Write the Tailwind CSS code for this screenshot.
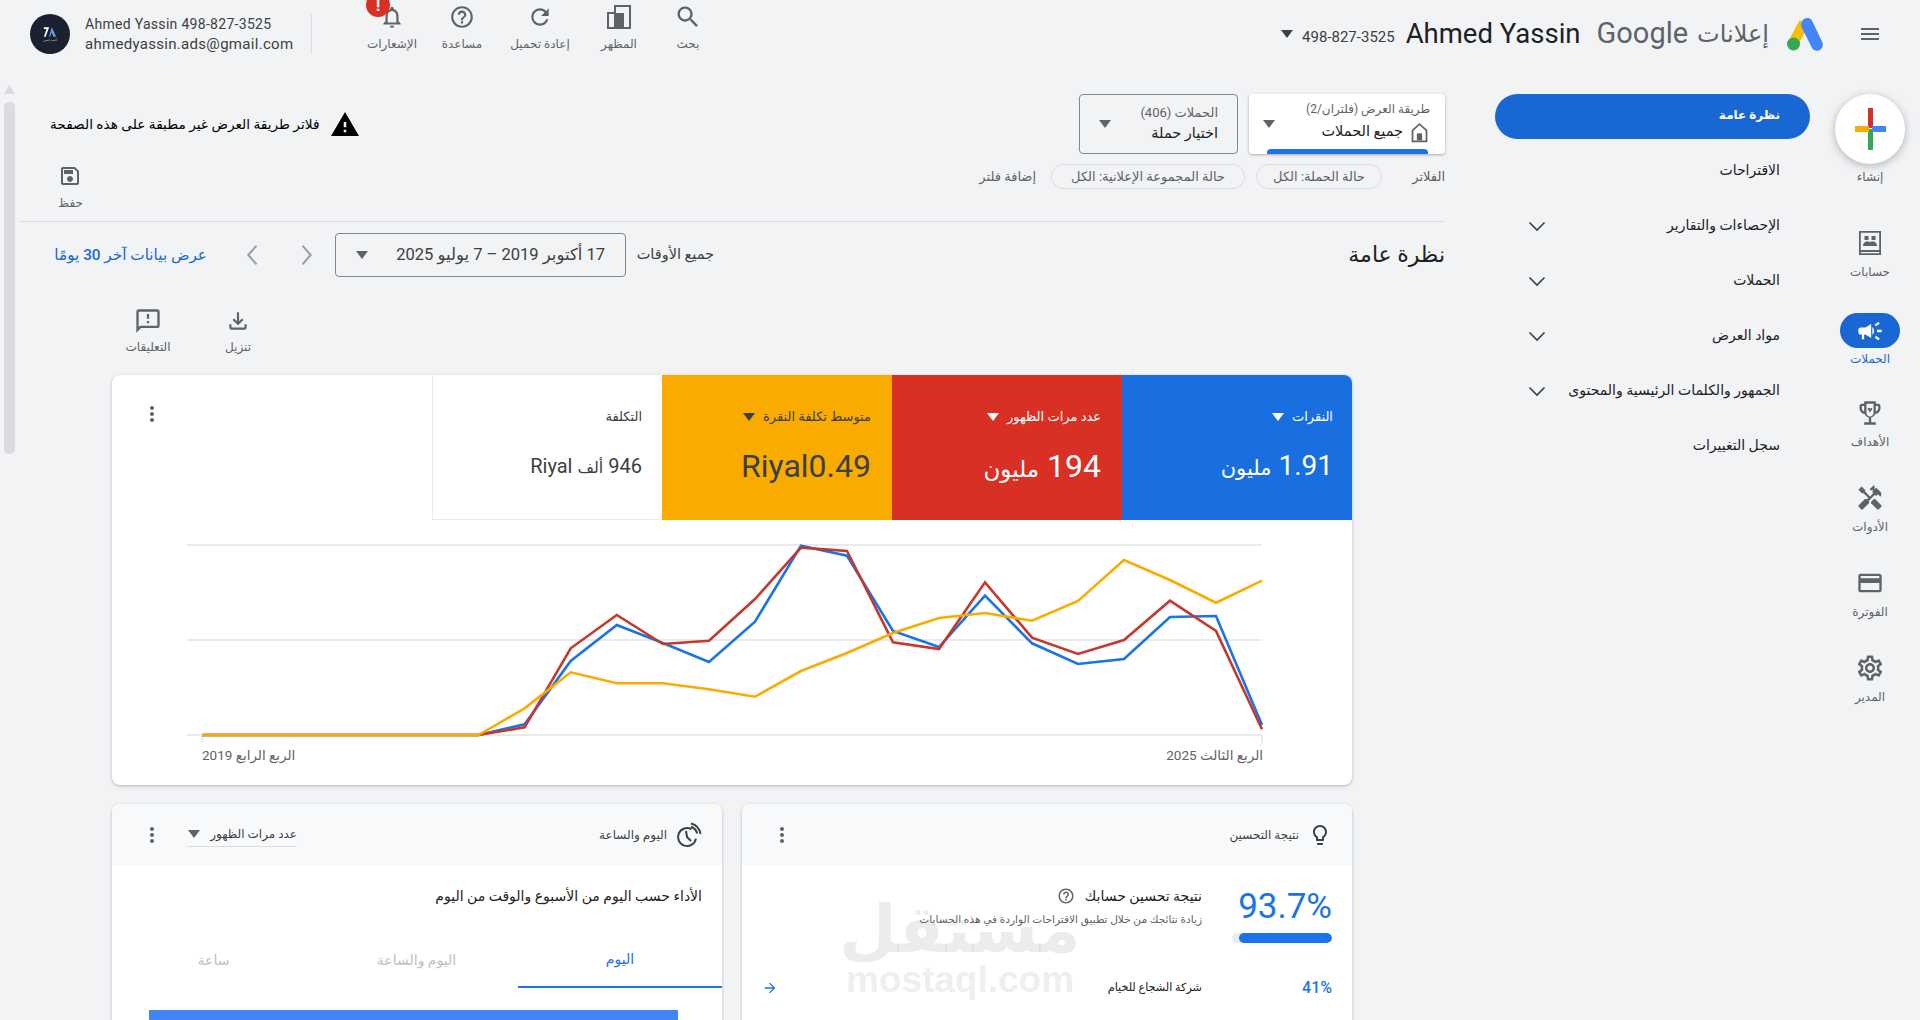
<!DOCTYPE html>
<html lang="ar" dir="rtl">
<head>
<meta charset="utf-8">
<script src="https://cdn.jsdelivr.net/npm/@tailwindcss/browser@4"></script>
<title>Google Ads</title>
</head>
<body class="relative w-[1920px] h-[1020px] overflow-hidden bg-[#f1f3f5] text-[#202124] font-['Roboto','Noto_Sans','DejaVu_Sans',sans-serif]">

<!-- top bar -->
<header class="flex justify-between h-[94px]">
  <div class="flex items-center h-[68px] pr-[38px]">
    <svg class="w-[24px] h-[24px] fill-[#5f6368]" viewBox="0 0 24 24"><path d="M3 18h18v-2H3v2zm0-5h18v-2H3v2zm0-7v2h18V6H3z"/></svg>
    <svg class="w-[36px] h-[34px] mr-[35px]" viewBox="0 0 36 34"><path d="M13 2.500 1.500 24l8 7L19 13z" fill="#fbbc04"/><path d="M24.500 2.500C22 0 17 .5 15 4c-1.500 3 -1 5 0 7l10 20c2 3 6 3.500 8.500 1.500 2.500-2 3-5 1.500-8z" fill="#4285f4"/><circle cx="6.500" cy="27" r="6.500" fill="#34a853"/></svg>
    <span class="text-[24px] text-[#5f6368] mr-[18px]">إعلانات</span>
    <span class="text-[29px] text-[#5f6368] mr-[9px]" dir="ltr">Google</span>
    <span class="text-[27.500px] text-[#202124] mr-[16px]" dir="ltr">Ahmed Yassin</span>
    <span class="text-[15px] text-[#3c4043] mr-[11px] mt-[7px]" dir="ltr">498-827-3525</span>
    <svg class="w-[12px] h-[8px] fill-[#3c4043] mr-[9px]" viewBox="0 0 12 8"><path d="M0 0h12L6 8z"/></svg>
  </div>
  <div class="flex items-start pl-[30px] pt-[14px]" dir="ltr">
    <div class="w-[40px] h-[40px] rounded-full bg-[#1b2130] flex flex-col items-center justify-center">
      <svg class="w-[14px] h-[12px]" viewBox="0 0 16 13"><path d="M1 1h6L3 12H1l3-9H1z" fill="#fff"/><path d="M10 1l5 11h-3l-2-5-2 5H7z" fill="#6aa0e8"/></svg>
      <span class="text-[3px] leading-[4px] text-[#cfd4dc]">أحمد ياسين</span>
    </div>
    <div class="ml-[15px] w-[226px] text-[#3c4043]">
      <div class="text-[14px] leading-[20px] tracking-[0.3px]">Ahmed Yassin 498-827-3525</div>
      <div class="text-[15px] leading-[20px] tracking-[0.3px]">ahmedyassin.ads@gmail.com</div>
    </div>
    <div class="w-px h-[40px] bg-[#dadce0]"></div>
    <div class="flex -mt-[14px] ml-[50px] text-[#5f6368]">
      <div class="relative w-[60px] flex flex-col items-center">
        <span class="absolute left-[4px] -top-[7px] w-[24px] h-[24px] rounded-full bg-[#d93025] text-white text-[17px] font-bold leading-[24px] text-center">!</span>
        <svg class="w-[26px] h-[26px] mt-[4px] fill-[#5f6368]" viewBox="0 0 24 24"><path d="M12 22c1.100 0 2-.9 2-2h-4c0 1.100.9 2 2 2zm6-6v-5c0-3.070-1.630-5.640-4.500-6.320V4c0-.83-.67-1.500-1.500-1.500s-1.500.67-1.500 1.500v.68C7.640 5.360 6 7.920 6 11v5l-2 2v1h16v-1l-2-2zm-2 1H8v-6c0-2.480 1.510-4.500 4-4.500s4 2.020 4 4.500v6z"/></svg>
        <span class="text-[12px] leading-[16px] mt-[6px]">الإشعارات</span>
      </div>
      <div class="w-[60px] ml-[10px] flex flex-col items-center">
        <svg class="w-[28px] h-[26px] mt-[4px] fill-[#5f6368]" viewBox="0 0 24 24"><path d="M11 18h2v-2h-2v2zm1-16C6.480 2 2 6.480 2 12s4.480 10 10 10 10-4.480 10-10S17.520 2 12 2zm0 18c-4.410 0-8-3.590-8-8s3.590-8 8-8 8 3.590 8 8-3.590 8-8 8zm0-14c-2.210 0-4 1.790-4 4h2c0-1.100.9-2 2-2s2 .9 2 2c0 2-3 1.750-3 5h2c0-2.250 3-2.500 3-5 0-2.210-1.790-4-4-4z"/></svg>
        <span class="text-[12px] leading-[16px] mt-[6px]">مساعدة</span>
      </div>
      <div class="w-[60px] ml-[18px] flex flex-col items-center">
        <svg class="w-[26px] h-[26px] mt-[4px] fill-[#5f6368]" viewBox="0 0 24 24"><path d="M17.650 6.350C16.200 4.900 14.210 4 12 4c-4.420 0-7.990 3.580-7.990 8s3.570 8 7.990 8c3.730 0 6.840-2.550 7.730-6h-2.080c-.82 2.330-3.040 4-5.650 4-3.310 0-6-2.690-6-6s2.690-6 6-6c1.660 0 3.140.69 4.220 1.780L13 11h7V4l-2.350 2.350z"/></svg>
        <span class="text-[12px] leading-[16px] mt-[6px] whitespace-nowrap">إعادة تحميل</span>
      </div>
      <div class="w-[60px] ml-[19px] flex flex-col items-center">
        <svg class="w-[24px] h-[24px] mt-[5px]" viewBox="0 0 24 24"><rect x="8" y="1" width="15" height="22" fill="none" stroke="#5f6368" stroke-width="2"/><rect x="1" y="8" width="7" height="15" fill="none" stroke="#5f6368" stroke-width="2"/><rect x="7" y="8" width="10" height="15" fill="#5f6368"/></svg>
        <span class="text-[12px] leading-[16px] mt-[7px]">المظهر</span>
      </div>
      <div class="w-[60px] ml-[9px] flex flex-col items-center">
        <svg class="w-[28px] h-[28px] mt-[3px] fill-[#5f6368]" viewBox="0 0 24 24"><path d="M15.500 14h-.79l-.28-.27C15.410 12.590 16 11.110 16 9.500 16 5.910 13.090 3 9.500 3S3 5.910 3 9.500 5.910 16 9.500 16c1.610 0 3.090-.59 4.230-1.570l.27.28v.79l5 4.990L20.490 19l-4.990-5zm-6 0C7.010 14 5 11.990 5 9.500S7.010 5 9.500 5 14 7.010 14 9.500 11.990 14 9.500 14z"/></svg>
        <span class="text-[12px] leading-[16px] mt-[5px]">بحث</span>
      </div>
    </div>
  </div>
</header>

<div class="flex items-start">
  <!-- icon rail -->
  <aside class="w-[80px] mr-[10px] shrink-0 flex flex-col items-center text-[#5f6368]">
    <button class="w-[70px] h-[70px] rounded-full bg-white shadow-[0_2px_8px_rgba(60,64,67,0.35)] flex items-center justify-center">
      <svg class="w-[31px] h-[42px]" viewBox="0 0 31 42"><rect x="13" y="0" width="5" height="20" fill="#d93025"/><rect x="13" y="21" width="5" height="21" fill="#34a853"/><rect x="0" y="18" width="14" height="6" fill="#f9ab00"/><rect x="17" y="18" width="14" height="6" fill="#4285f4"/></svg>
    </button>
    <span class="text-[12px] leading-[16px] mt-[5px]">إنشاء</span>
    <div class="h-[85px] mt-[43px] flex flex-col items-center">
      <svg class="w-[24px] h-[30px] fill-[#5f6368]" viewBox="0 0 24 30"><path fill-rule="evenodd" d="M1 3h22v24H1zm1.800 1.800V22h18.400V4.800zm0 19.200v1.200h18.400V24z"/><rect x="6.500" y="8" width="4" height="4"/><rect x="13.500" y="8" width="4" height="4"/><path d="M5 18c0-3 2-4.500 3.500-4.500h1.500c1 0 1.700.4 2 1 .3-.6 1-1 2-1h1.500c1.500 0 3.500 1.500 3.500 4.500z"/></svg>
      <span class="text-[12px] leading-[16px] mt-[6px]">حسابات</span>
    </div>
    <div class="h-[85px] flex flex-col items-center">
      <div class="w-[60px] h-[35px] rounded-[18px] bg-[#1967d2] flex items-center justify-center">
        <svg class="w-[28px] h-[28px] fill-white" viewBox="0 0 24 24"><path d="M18 11v2h4v-2h-4zm-2 6.610c.96.71 2.210 1.650 3.200 2.390.4-.53.8-1.070 1.200-1.600-.99-.74-2.240-1.680-3.200-2.400-.4.54-.8 1.080-1.200 1.610zM20.400 5.600c-.4-.53-.8-1.070-1.200-1.600-.99.74-2.240 1.680-3.200 2.400.4.53.8 1.070 1.200 1.600.96-.72 2.210-1.650 3.200-2.400zM4 9c-1.100 0-2 .9-2 2v2c0 1.100.9 2 2 2h1v4h2v-4h1l5 3V6L8 9H4zm11.500 3c0-1.330-.58-2.530-1.500-3.350v6.690c.92-.81 1.500-2.010 1.500-3.340z"/></svg>
      </div>
      <span class="text-[12px] leading-[16px] mt-[3px] text-[#1967d2]">الحملات</span>
    </div>
    <div class="h-[85px] flex flex-col items-center">
      <svg class="w-[28px] h-[30px] fill-[#5f6368]" viewBox="0 0 24 24"><path fill-rule="evenodd" d="M19 4h-2V2H7v2H5c-1.100 0-2 .9-2 2v2c0 2.550 1.920 4.630 4.390 4.940.63 1.500 1.980 2.630 3.610 2.960V20H7v2h10v-2h-4v-4.100c1.630-.33 2.980-1.460 3.610-2.960C19.080 12.630 21 10.550 21 8V6c0-1.100-.9-2-2-2zM5 8V6h2v4.820C5.840 10.400 5 9.300 5 8zm10 4c0 1.650-1.350 3-3 3s-3-1.350-3-3V4h6zm4-4c0 1.300-.84 2.400-2 2.820V6h2z"/><path d="M12 11.500 10 8.500c0-1 1.500-1.200 2-.3.500-.9 2-.7 2 .3z"/></svg>
      <span class="text-[12px] leading-[16px] mt-[6px]">الأهداف</span>
    </div>
    <div class="h-[85px] flex flex-col items-center">
      <svg class="w-[28px] h-[30px] fill-[#5f6368]" viewBox="0 0 24 24"><path d="M21.670 18.170l-5.300-5.300h-.99l-2.540 2.540v.99l5.300 5.300c.39.39 1.020.39 1.410 0l2.120-2.120c.39-.38.39-1.020 0-1.410zM17.340 10.190l1.410-1.410 2.120 2.120c1.170-1.170 1.170-3.070 0-4.240l-3.540-3.540-1.410 1.410V1.710l-.7-.71-3.540 3.540.71.71h2.830l-1.410 1.410 1.060 1.060-2.890 2.890-4.130-4.130V5.060L4.830 2.040 2 4.870 5.030 7.900h1.410l4.130 4.130-.85.85H7.600l-5.300 5.300c-.39.39-.39 1.020 0 1.410l2.120 2.120c.39.39 1.020.39 1.410 0l5.300-5.300v-2.120l5.150-5.150 1.060 1.050z"/></svg>
      <span class="text-[12px] leading-[16px] mt-[6px]">الأدوات</span>
    </div>
    <div class="h-[85px] flex flex-col items-center">
      <svg class="w-[28px] h-[30px] fill-[#5f6368]" viewBox="0 0 24 24"><path d="M20 4H4c-1.110 0-1.990.89-1.990 2L2 18c0 1.110.89 2 2 2h16c1.110 0 2-.89 2-2V6c0-1.110-.89-2-2-2zm0 14H4v-6h16v6zm0-10H4V6h16v2z"/></svg>
      <span class="text-[12px] leading-[16px] mt-[6px]">الفوترة</span>
    </div>
    <div class="h-[85px] flex flex-col items-center">
      <svg class="w-[30px] h-[30px] fill-[#5f6368]" viewBox="0 0 24 24"><path d="M19.430 12.980c.04-.32.07-.64.07-.98 0-.34-.03-.66-.07-.98l2.110-1.650c.19-.15.24-.42.12-.64l-2-3.460c-.09-.16-.26-.25-.44-.25-.06 0-.12.01-.17.03l-2.490 1c-.52-.4-1.080-.73-1.690-.98l-.38-2.650C14.460 2.180 14.250 2 14 2h-4c-.25 0-.46.18-.49.42l-.38 2.650c-.61.25-1.170.59-1.690.98l-2.490-1c-.06-.02-.12-.03-.18-.03-.17 0-.34.09-.43.25l-2 3.460c-.13.22-.07.49.12.64l2.110 1.650c-.04.32-.07.65-.07.98 0 .33.03.66.07.98l-2.110 1.650c-.19.15-.24.42-.12.64l2 3.460c.09.16.26.25.44.25.06 0 .12-.01.17-.03l2.490-1c.52.4 1.080.73 1.690.98l.38 2.650c.03.24.24.42.49.42h4c.25 0 .46-.18.49-.42l.38-2.650c.61-.25 1.170-.59 1.690-.98l2.490 1c.06.02.12.03.18.03.17 0 .34-.09.43-.25l2-3.460c.12-.22.07-.49-.12-.64l-2.110-1.650zm-1.980-1.710c.04.31.05.52.05.73 0 .21-.02.43-.05.73l-.14 1.130.89.7 1.080.84-.7 1.210-1.270-.51-1.040-.42-.9.68c-.43.32-.84.56-1.250.73l-1.060.43-.16 1.130-.2 1.350h-1.400l-.19-1.350-.16-1.130-1.060-.43c-.43-.18-.83-.41-1.230-.71l-.91-.7-1.060.43-1.270.51-.7-1.210 1.080-.84.89-.7-.14-1.130c-.03-.31-.05-.54-.05-.74s.02-.43.05-.73l.14-1.130-.89-.7-1.080-.84.7-1.210 1.270.51 1.040.42.9-.68c.43-.32.84-.56 1.250-.73l1.060-.43.16-1.130.2-1.350h1.390l.19 1.350.16 1.130 1.060.43c.43.18.83.41 1.230.71l.91.7 1.060-.43 1.270-.51.7 1.210-1.070.85-.89.7.14 1.130zM12 8c-2.210 0-4 1.790-4 4s1.790 4 4 4 4-1.790 4-4-1.790-4-4-4zm0 6c-1.100 0-2-.9-2-2s.9-2 2-2 2 .9 2 2-.9 2-2 2z"/></svg>
      <span class="text-[12px] leading-[16px] mt-[6px]">المدير</span>
    </div>
  </aside>

  <!-- nav -->
  <nav class="w-[315px] mr-[20px] shrink-0 text-[14px] font-medium">
    <div class="h-[45px] rounded-[23px] bg-[#1967d2] text-white text-[12px] font-bold flex items-center pr-[30px] pb-[4px]">نظرة عامة</div>
    <div class="mt-[4px]">
      <div class="h-[55px] flex items-center pr-[30px]">الاقتراحات</div>
      <div class="h-[55px] flex items-center justify-between pr-[30px] pl-[30px]">الإحصاءات والتقارير<svg class="w-[24px] h-[24px] fill-none stroke-[#3c4043] stroke-[1.600]" viewBox="0 0 24 24"><path d="M4.500 8.500 12 16l7.500-7.500"/></svg></div>
      <div class="h-[55px] flex items-center justify-between pr-[30px] pl-[30px]">الحملات<svg class="w-[24px] h-[24px] fill-none stroke-[#3c4043] stroke-[1.600]" viewBox="0 0 24 24"><path d="M4.500 8.500 12 16l7.500-7.500"/></svg></div>
      <div class="h-[55px] flex items-center justify-between pr-[30px] pl-[30px]">مواد العرض<svg class="w-[24px] h-[24px] fill-none stroke-[#3c4043] stroke-[1.600]" viewBox="0 0 24 24"><path d="M4.500 8.500 12 16l7.500-7.500"/></svg></div>
      <div class="h-[55px] flex items-center justify-between pr-[30px] pl-[30px]">الجمهور والكلمات الرئيسية والمحتوى<svg class="w-[24px] h-[24px] fill-none stroke-[#3c4043] stroke-[1.600]" viewBox="0 0 24 24"><path d="M4.500 8.500 12 16l7.500-7.500"/></svg></div>
      <div class="h-[55px] flex items-center pr-[30px]">سجل التغييرات</div>
    </div>
  </nav>

  <!-- main -->
  <main class="w-[1426px] mr-[50px] shrink-0">
    <div class="flex justify-between h-[60px]">
      <div class="flex">
        <div class="relative w-[196px] h-[60px] bg-white rounded-[4px] shadow-[0_1px_3px_rgba(60,64,67,0.4)] flex items-center justify-between pr-[15px] pl-[14px]">
          <div>
            <div class="text-[12px] leading-[16px] text-[#5f6368] -mt-[5px]">طريقة العرض (فلتران/2)</div>
            <div class="flex items-center gap-[6px] text-[14.500px] font-medium leading-[20px] mt-[5px]">
              <svg class="w-[21px] h-[21px] fill-[#5f6368]" viewBox="0 0 24 24"><path d="M12 1 3 9v14h18V9zm7 20H5V10l7-6.200L19 10z"/><rect x="9" y="13" width="6" height="8"/></svg>
              جميع الحملات
            </div>
          </div>
          <svg class="w-[12px] h-[8px] fill-[#5f6368]" viewBox="0 0 12 8"><path d="M0 0h12L6 8z"/></svg>
          <div class="absolute bottom-0 right-[17px] w-[161px] h-[5px] bg-[#1a73e8] rounded-t-[4px]"></div>
        </div>
        <div class="w-[159px] h-[60px] mr-[11px] border border-[#80868b] rounded-[4px] flex items-center justify-between pr-[19px] pl-[19px]">
          <div>
            <div class="text-[13px] leading-[16px] text-[#5f6368]">الحملات (406)</div>
            <div class="text-[14.500px] font-medium leading-[20px] mt-[3px]">اختيار حملة</div>
          </div>
          <svg class="w-[12px] h-[8px] fill-[#5f6368]" viewBox="0 0 12 8"><path d="M0 0h12L6 8z"/></svg>
        </div>
      </div>
      <div class="flex items-center gap-[12px] pl-[31px]">
        <svg class="w-[28px] h-[24px] fill-black" viewBox="1 2 22 19" preserveAspectRatio="none"><path d="M1 21h22L12 2 1 21zm12-3h-2v-2h2v2zm0-4h-2v-4h2v4z"/></svg>
        <span class="text-[13.700px] text-black">فلاتر طريقة العرض غير مطبقة على هذه الصفحة</span>
      </div>
    </div>

    <div class="flex justify-between h-[58px] mt-[10px] border-b border-[#dadce0] text-[13px] text-[#5f6368]">
      <div class="flex items-start">
        <span class="leading-[25px] w-[63px]">الفلاتر</span>
        <span class="h-[25px] w-[126px] rounded-[13px] border border-[#dadce0] flex items-center justify-center whitespace-nowrap">حالة الحملة: الكل</span>
        <span class="h-[25px] w-[194px] mr-[11px] rounded-[13px] border border-[#dadce0] flex items-center justify-center whitespace-nowrap">حالة المجموعة الإعلانية: الكل</span>
        <span class="leading-[25px] mr-[15px]">إضافة فلتر</span>
      </div>
      <div class="flex flex-col items-center pl-[39px]">
        <svg class="w-[24px] h-[24px] fill-[#5f6368]" viewBox="0 0 24 24"><path d="M17 3H5c-1.110 0-2 .9-2 2v14c0 1.100.89 2 2 2h14c1.100 0 2-.9 2-2V7l-4-4zm2 16H5V5h11.170L19 7.830V19zm-7-7c-1.660 0-3 1.340-3 3s1.340 3 3 3 3-1.340 3-3-1.340-3-3-3zM6 6h9v4H6z"/></svg>
        <span class="text-[12px] leading-[16px] mt-[7px]">حفظ</span>
      </div>
    </div>

    <div class="flex justify-between items-center h-[44px] mt-[11px]">
      <h1 class="text-[22px] font-normal -mt-[2px]">نظرة عامة</h1>
      <div class="flex items-center pl-[35px]">
        <span class="text-[14.500px] w-[77px] text-[#3c4043] ml-[11px] whitespace-nowrap">جميع الأوقات</span>
        <div class="w-[291px] h-[44px] border border-[#80868b] rounded-[4px] flex items-center justify-between pr-[20px] pl-[20px]">
          <span class="text-[16.500px] text-[#3c4043]">17 أكتوبر 2019 – 7 يوليو 2025</span>
          <svg class="w-[12px] h-[8px] fill-[#5f6368]" viewBox="0 0 12 8"><path d="M0 0h12L6 8z"/></svg>
        </div>
        <svg class="w-[28px] h-[28px] mr-[15px] fill-none stroke-[#9aa0a6] stroke-[1.800]" viewBox="0 0 24 24"><path d="M9 4l7 8-7 8"/></svg>
        <svg class="w-[28px] h-[28px] mr-[25px] fill-none stroke-[#9aa0a6] stroke-[1.800]" viewBox="0 0 24 24"><path d="M15 4l-7 8 7 8"/></svg>
        <a class="text-[15.300px] w-[153px] font-medium text-[#1967d2] mr-[32px] whitespace-nowrap">عرض بيانات آخر 30 يومًا</a>
      </div>
    </div>

    <div class="flex justify-end h-[67px] mt-[31px] pl-[99px] gap-[30px] text-[#5f6368]">
      <div class="w-[60px] flex flex-col items-center">
        <svg class="w-[26px] h-[26px] fill-[#5f6368]" viewBox="0 0 24 24"><path d="M18 15v3H6v-3H4v3c0 1.100.9 2 2 2h12c1.100 0 2-.9 2-2v-3h-2zm-1-4l-1.410-1.410L13 12.170V4h-2v8.170L8.410 9.590 7 11l5 5 5-5z"/></svg>
        <span class="text-[12px] leading-[16px] mt-[5px]">تنزيل</span>
      </div>
      <div class="w-[60px] flex flex-col items-center">
        <svg class="w-[28px] h-[28px] -mt-px fill-[#5f6368]" viewBox="0 0 24 24"><path d="M20 2H4c-1.100 0-1.990.9-1.990 2L2 22l4-4h14c1.100 0 2-.9 2-2V4c0-1.100-.9-2-2-2zm0 14H5.170L4 17.170V4h16v12zm-9-4h2v2h-2zm0-6h2v4h-2z"/></svg>
        <span class="text-[12px] leading-[16px] mt-[4px]">التعليقات</span>
      </div>
    </div>

    <!-- chart card -->
    <div class="mx-[93px]">
      <section class="w-[1240px] h-[410px] bg-white rounded-[8px] shadow-[0_1px_3px_rgba(60,64,67,0.35)] overflow-hidden">
        <div class="flex h-[145px]">
          <div class="w-[230px] bg-[#1a6fe0] text-white pt-[32px] pr-[19px]">
            <div class="text-[13px] leading-[20px] flex items-center gap-[8px]">النقرات<svg class="w-[12px] h-[8px] fill-white" viewBox="0 0 12 8"><path d="M0 0h12L6 8z"/></svg></div>
            <div class="text-[28px] leading-[40px] mt-[19px] whitespace-nowrap tracking-[-1px]">1.91 <span class="text-[21px] tracking-normal">مليون</span></div>
          </div>
          <div class="w-[230px] bg-[#d93025] text-white pt-[32px] pr-[21px]">
            <div class="text-[13px] leading-[20px] flex items-center gap-[8px]">عدد مرات الظهور<svg class="w-[12px] h-[8px] fill-white" viewBox="0 0 12 8"><path d="M0 0h12L6 8z"/></svg></div>
            <div class="text-[32px] leading-[40px] mt-[19px] whitespace-nowrap">194 <span class="text-[23px]">مليون</span></div>
          </div>
          <div class="w-[230px] bg-[#f9ab00] text-[#3c4043] pt-[32px] pr-[21px]">
            <div class="text-[13px] leading-[20px] flex items-center gap-[8px]">متوسط تكلفة النقرة<svg class="w-[12px] h-[8px] fill-[#3c4043]" viewBox="0 0 12 8"><path d="M0 0h12L6 8z"/></svg></div>
            <div class="text-[32px] leading-[40px] mt-[19px]">Riyal0.49</div>
          </div>
          <div class="w-[230px] border-l border-b border-[#e8eaed] text-[#3c4043] pt-[32px] pr-[20px]">
            <div class="text-[13px] font-medium leading-[20px]">التكلفة</div>
            <div class="text-[20px] leading-[40px] mt-[19px] whitespace-nowrap">946 <span class="text-[16px]">ألف</span> Riyal</div>
          </div>
          <div class="flex-1 flex justify-end items-start pt-[27px] pl-[28px]">
            <svg class="w-[24px] h-[24px] fill-[#5f6368]" viewBox="0 0 24 24"><path d="M12 8c1.100 0 2-.9 2-2s-.9-2-2-2-2 .9-2 2 .9 2 2 2zm0 2c-1.100 0-2 .9-2 2s.9 2 2 2 2-.9 2-2-.9-2-2-2zm0 6c-1.100 0-2 .9-2 2s.9 2 2 2 2-.9 2-2-.9-2-2-2z"/></svg>
          </div>
        </div>
        <svg class="block w-[1240px] h-[225px]" viewBox="112 520 1240 225">
          <g stroke="#e8eaed" stroke-width="2" fill="none">
            <path d="M187 545H1262M187 640H1262M187 735H1262M202 735v8M1262 735v8"/>
          </g>
          <g fill="none" stroke-width="2.600" stroke-linejoin="miter">
            <polyline stroke="#1a73e8" points="202,735 248,735 294,735 340,735 386,735 432,735 478.500,735 524.600,724.300 570.700,661 616.800,625 662.900,643 709,662 755,621.700 801,545.700 847,555.700 893,631 939,647 985,595.700 1032,643.300 1078,664 1124,659 1170,617 1216,616 1262,725"/>
            <polyline stroke="#c5392c" points="202,735 248,735 294,735 340,735 386,735 432,735 478.500,735 524.600,727.300 570.700,648.300 616.800,615 662.900,644 709,640.700 755,599 801,547.700 847,551 893,642.300 939,649 985,582.300 1032,637.700 1078,654 1124,640 1170,600.700 1216,631 1262,729.300"/>
            <polyline stroke="#f9ab00" points="202,735 248,735 294,735 340,735 386,735 432,735 478.500,735 524.600,708.300 570.700,672.300 616.800,683.300 662.900,683.300 709,689.300 755,696.700 801,671 847,653 893,633 939,618 985,613 1032,620.700 1078,601 1124,560 1170,580 1216,602.700 1262,580.700"/>
          </g>
        </svg>
        <div class="flex justify-between pr-[89px] pl-[90px] text-[13.500px] text-[#5f6368] leading-[20px]">
          <span>الربع الثالث 2025</span>
          <span>الربع الرابع 2019</span>
        </div>
      </section>

      <div class="flex gap-[20px] mt-[19px]">
        <section class="w-[610px] h-[400px] bg-white rounded-t-[8px] shadow-[0_1px_3px_rgba(60,64,67,0.35)] overflow-hidden">
          <div class="h-[61px] bg-[#f8f9fa] flex items-center justify-between pr-[20px] pl-[28px]">
            <div class="flex items-center gap-[9px] text-[12px] text-[#3c4043]">
              <svg class="w-[24px] h-[26px] fill-[#3c4043]" viewBox="0 0 24 24"><path d="M9 21c0 .5.4 1 1 1h4c.6 0 1-.5 1-1v-1H9v1zm3-19C8.100 2 5 5.100 5 9c0 2.400 1.200 4.500 3 5.700V17c0 .5.4 1 1 1h6c.6 0 1-.5 1-1v-2.300c1.800-1.300 3-3.400 3-5.700 0-3.900-3.100-7-7-7zm2.900 11.100l-.9.6V16h-4v-2.300l-.9-.6C7.800 12.200 7 10.700 7 9c0-2.800 2.200-5 5-5s5 2.200 5 5c0 1.700-.8 3.200-2.100 4.100z"/></svg>
              نتيجة التحسين
            </div>
            <svg class="w-[24px] h-[24px] fill-[#5f6368]" viewBox="0 0 24 24"><path d="M12 8c1.100 0 2-.9 2-2s-.9-2-2-2-2 .9-2 2 .9 2 2 2zm0 2c-1.100 0-2 .9-2 2s.9 2 2 2 2-.9 2-2-.9-2-2-2zm0 6c-1.100 0-2 .9-2 2s.9 2 2 2 2-.9 2-2-.9-2-2-2z"/></svg>
          </div>
          <div class="flex pr-[20px] pt-[20px]">
            <div class="w-[100px]">
              <div class="text-[35px] leading-[44px] text-[#1a73e8] whitespace-nowrap text-right" dir="ltr">93.7%</div>
              <div class="mt-[4px] h-[10px] w-[100px] rounded-[5px] bg-[#e8eaed] overflow-hidden flex"><div class="h-[10px] w-[93px] bg-[#1a73e8] rounded-[5px]"></div></div>
            </div>
            <div class="mr-[30px] pt-[1px]">
              <div class="flex items-center gap-[10px] text-[14px] font-medium leading-[20px]">نتيجة تحسين حسابك
                <svg class="w-[18px] h-[18px] fill-[#5f6368]" viewBox="0 0 24 24"><path d="M11 18h2v-2h-2v2zm1-16C6.480 2 2 6.480 2 12s4.480 10 10 10 10-4.480 10-10S17.520 2 12 2zm0 18c-4.410 0-8-3.590-8-8s3.590-8 8-8 8 3.590 8 8-3.590 8-8 8zm0-14c-2.210 0-4 1.790-4 4h2c0-1.100.9-2 2-2s2 .9 2 2c0 2-3 1.750-3 5h2c0-2.250 3-2.500 3-5 0-2.210-1.790-4-4-4z"/></svg>
              </div>
              <div class="text-[10.600px] text-[#5f6368] leading-[16px] mt-[6px]">زيادة نتائجك من خلال تطبيق الاقتراحات الواردة في هذه الحسابات</div>
            </div>
          </div>
          <div class="flex items-center pr-[20px] pl-[20px] mt-[33px] h-[24px]">
            <span class="w-[100px] text-[16px] font-medium text-[#1a73e8] text-right" dir="ltr">41%</span>
            <span class="mr-[30px] text-[11.200px] flex-1">شركة الشجاع للخيام</span>
            <svg class="w-[16px] h-[16px] fill-[#1a73e8] -scale-x-100" viewBox="0 0 24 24"><path d="M20 11H7.830l5.590-5.590L12 4l-8 8 8 8 1.410-1.410L7.830 13H20v-2z"/></svg>
          </div>
        </section>
        <section class="w-[610px] h-[400px] bg-white rounded-t-[8px] shadow-[0_1px_3px_rgba(60,64,67,0.35)] overflow-hidden">
          <div class="h-[61px] bg-[#f8f9fa] flex items-center justify-between pr-[20px] pl-[28px]">
            <div class="flex items-center gap-[9px] text-[12px] text-[#3c4043]">
              <svg class="w-[26px] h-[26px] fill-none stroke-[#3c4043] stroke-[2]" viewBox="0 0 26 26"><path d="M15.500 7.200A9 9 0 1 0 19.900 16.600"/><path d="M10 9 11 15 15 19"/><path d="M15 1.500A13 13 0 0 1 24.500 12"/><path d="M15 4.800A10 10 0 0 1 21.200 11.500"/></svg>
              اليوم والساعة
            </div>
            <div class="flex items-center gap-[23px]">
              <div class="w-[110px] h-[24px] border-b border-[#dadce0] flex items-center gap-[10px] text-[12px] text-[#3c4043]">عدد مرات الظهور<svg class="w-[12px] h-[8px] fill-[#5f6368]" viewBox="0 0 12 8"><path d="M0 0h12L6 8z"/></svg></div>
              <svg class="w-[24px] h-[24px] fill-[#5f6368]" viewBox="0 0 24 24"><path d="M12 8c1.100 0 2-.9 2-2s-.9-2-2-2-2 .9-2 2 .9 2 2 2zm0 2c-1.100 0-2 .9-2 2s.9 2 2 2 2-.9 2-2-.9-2-2-2zm0 6c-1.100 0-2 .9-2 2s.9 2 2 2 2-.9 2-2-.9-2-2-2z"/></svg>
            </div>
          </div>
          <div class="text-[14px] font-medium leading-[20px] text-[#202124] pr-[20px] pt-[21px]">الأداء حسب اليوم من الأسبوع والوقت من اليوم</div>
          <div class="flex mt-[34px] h-[48px] text-[14px] text-[#bdc1c6]">
            <div class="w-[204px] h-[48px] border-b-2 border-[#1a73e8] text-[#1a73e8] flex items-center justify-center pb-[8px]">اليوم</div>
            <div class="w-[203px] flex items-center justify-center pb-[8px]">اليوم والساعة</div>
            <div class="w-[203px] flex items-center justify-center pb-[8px]">ساعة</div>
          </div>
          <div class="h-[60px] w-[529px] mr-[44px] mt-[22px] bg-[#4285f4]"></div>
        </section>
      </div>
    </div>
  </main>
</div>

<!-- scrollbar -->
<div class="absolute left-[4px] top-[84px] w-[11px] h-[370px] flex flex-col items-center">
  <svg class="w-[11px] h-[10px] fill-[#dadce0]" viewBox="0 0 11 10"><path d="M0 10h11L5.500 1z"/></svg>
  <div class="w-[11px] flex-1 mt-[8px] rounded-[5px] bg-[#dadce0]"></div>
</div>

<!-- watermark -->
<div class="absolute left-[845px] top-[895px] w-[230px] flex flex-col items-center text-[#808080]/15 pointer-events-none">
  <span class="text-[66px] font-bold leading-[70px] whitespace-nowrap">مستقل</span>
  <span class="text-[37px] font-bold leading-[30px] font-['Liberation_Sans',sans-serif]" dir="ltr">mostaql.com</span>
</div>
</body>
</html>
